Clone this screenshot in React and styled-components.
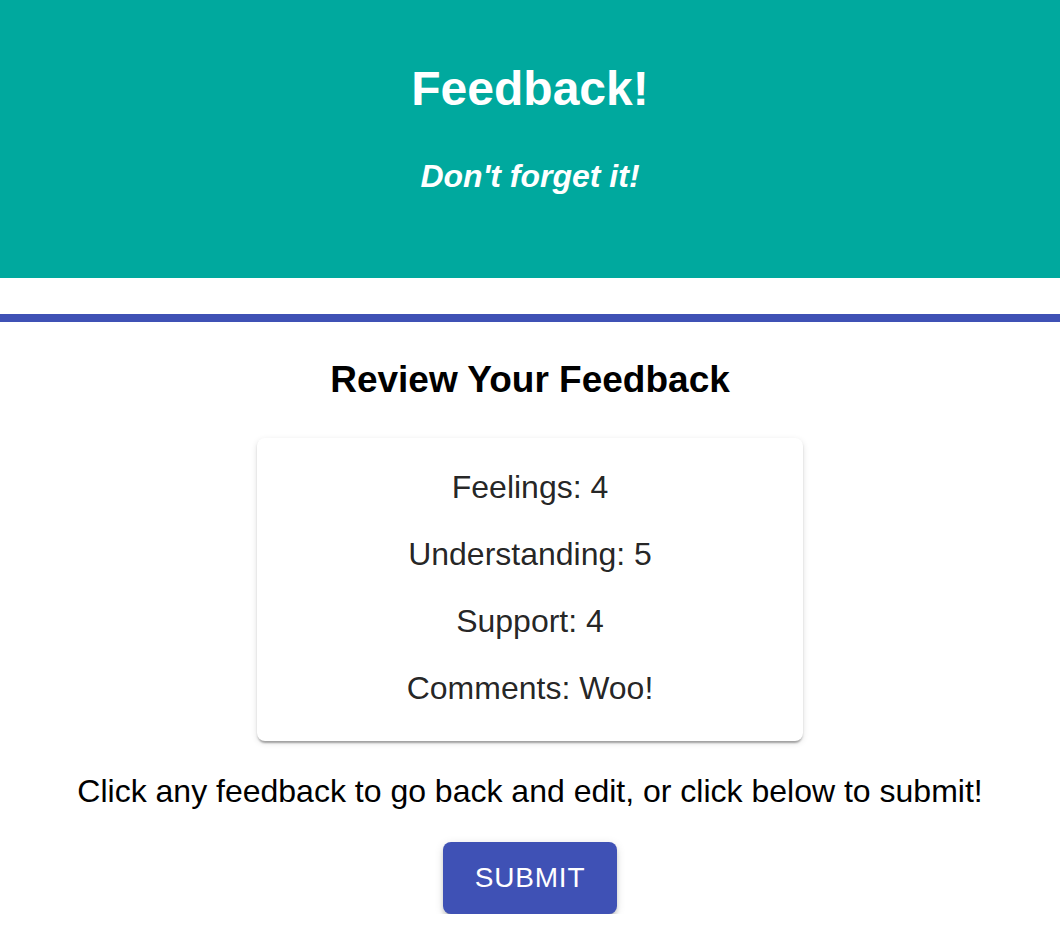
import React from 'react';
import styled, {createGlobalStyle} from 'styled-components';

const GlobalStyle = createGlobalStyle`
  body {
    margin: 0;
    background: #fff;
    font-family: "Liberation Sans", Arial, Helvetica, sans-serif;
  }
`

const feedback = [
    {label: 'Feelings', value: 4},
    {label: 'Understanding', value: 5},
    {label: 'Support', value: 4},
    {label: 'Comments', value: 'Woo!'},
];

const App = () => {
    return (
        <>
            <GlobalStyle/>
            <Header>
                <h1>Feedback!</h1>
                <h4>Don't forget it!</h4>
            </Header>
            <Divider/>
            <Review>
                <h3>Review Your Feedback</h3>
                <Card>
                    {
                        feedback.map(el => {
                            return <Item key={el.label}>{el.label}: {el.value}</Item>
                        })
                    }
                </Card>
                <Note>Click any feedback to go back and edit, or click below to submit!</Note>
                <SubmitButton>Submit</SubmitButton>
            </Review>
        </>
    )
};

const Header = styled.header`
  background: #00a99e;
  height: 278px;
  box-sizing: border-box;
  padding-top: 61px;
  text-align: center;
  color: white;

  h1 {
    margin: 0;
    font-size: 48px;
    line-height: 56px;
    font-weight: bold;
  }

  h4 {
    margin: 41px 0 0;
    font-size: 32px;
    line-height: 37px;
    font-weight: bold;
    font-style: italic;
  }
`

const Divider = styled.div`
  margin-top: 36px;
  height: 8px;
  background: #3f51b5;
`

const Review = styled.main`
  display: flex;
  flex-direction: column;
  align-items: center;
  text-align: center;

  h3 {
    margin: 36px 0 0;
    font-size: 37px;
    line-height: 43px;
    font-weight: bold;
    color: #000;
  }
`

const Card = styled.div`
  margin-top: 37px;
  width: 546px;
  box-sizing: border-box;
  padding: 31px 0 34px;
  display: flex;
  flex-direction: column;
  gap: 30px;
  background: #fff;
  border-radius: 8px;
  box-shadow: 0 4px 2px -2px rgba(0, 0, 0, 0.2),
  0 2px 2px 0 rgba(0, 0, 0, 0.14),
  0 2px 6px 0 rgba(0, 0, 0, 0.12);
`

const Item = styled.div`
  font-size: 32px;
  line-height: 37px;
  color: rgba(0, 0, 0, 0.87);
  cursor: pointer;
`

const Note = styled.p`
  margin: 32px 0 0;
  font-size: 32px;
  line-height: 37px;
  color: #000;
`

const SubmitButton = styled.button`
  margin-top: 32px;
  width: 174px;
  height: 72px;
  border: none;
  border-radius: 8px;
  background: #3f51b5;
  color: #fff;
  font-family: "Liberation Sans", Arial, sans-serif;
  font-size: 28px;
  letter-spacing: 0.8px;
  text-transform: uppercase;
  cursor: pointer;
  box-shadow: 0 6px 2px -4px rgba(0, 0, 0, 0.2),
  0 4px 4px 0 rgba(0, 0, 0, 0.14),
  0 2px 10px 0 rgba(0, 0, 0, 0.12);

  &:hover {
    background: #303f9f;
  }
`

export default App;
